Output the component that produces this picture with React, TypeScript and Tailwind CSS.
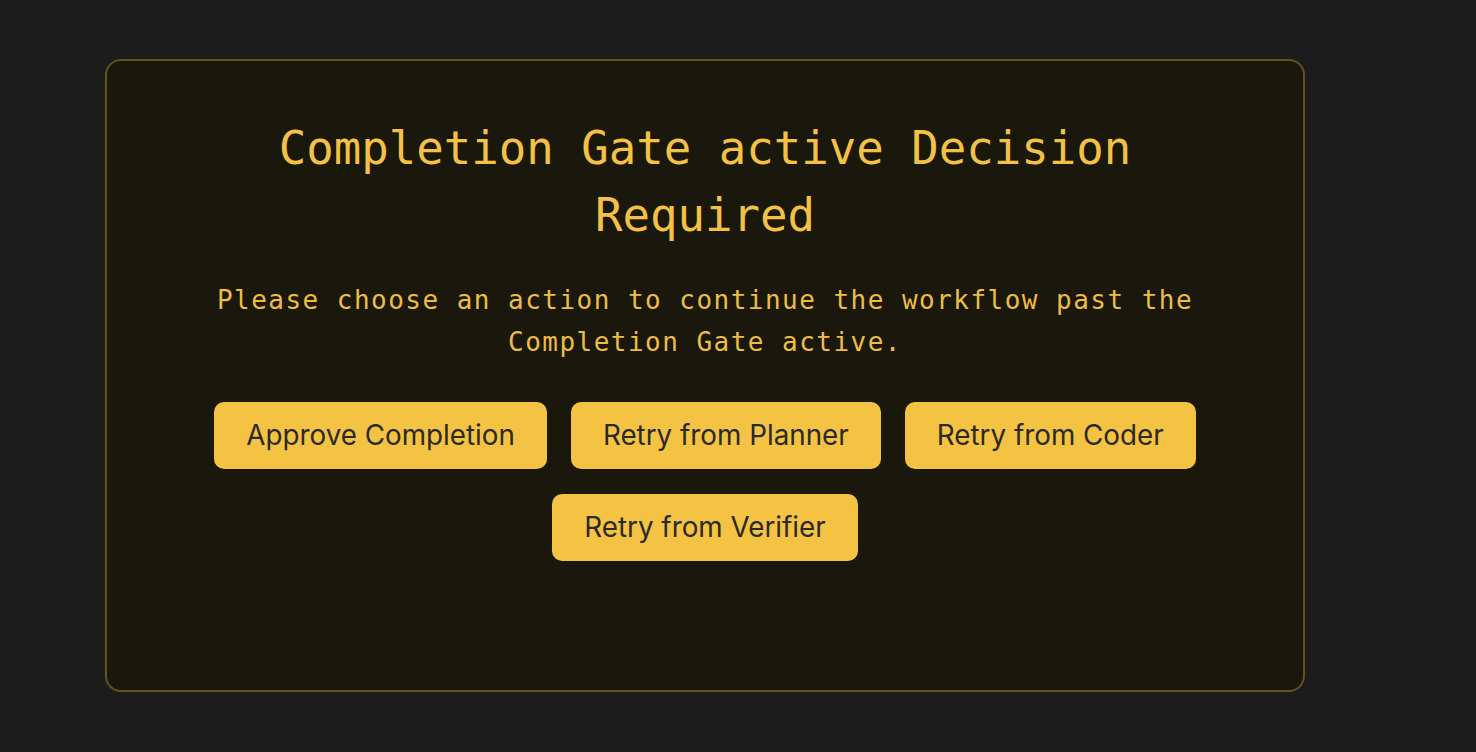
const actions = [
  "Approve Completion",
  "Retry from Planner",
  "Retry from Coder",
  "Retry from Verifier",
];

export default function App() {
  return (
    <main className="min-h-screen w-full bg-[#1c1c1c] pl-[105px] pt-[59px]">
      <section className="flex h-[633px] w-[1200px] flex-col items-center rounded-[16px] border-2 border-[#694f1c] bg-[#1a170d] px-[98px] pt-[54px]">
        <h1 className="text-center font-['DejaVu_Sans_Mono',monospace] text-[45.7px] leading-[67px] text-[#f3c244]">
          Completion Gate active Decision Required
        </h1>
        <p className="mt-[30px] text-center font-['DejaVu_Sans_Mono',monospace] text-[26px] leading-[42px] tracking-[1.47px] text-[#eebd43]">
          Please choose an action to continue the workflow past the Completion Gate active.
        </p>
        <div className="mt-[39px] flex flex-wrap justify-center gap-x-6 gap-y-[25px]">
          {actions.map((a) => (
            <button
              key={a}
              className="h-[67px] rounded-[10px] bg-[#f4c343] px-[32px] font-['Inter',sans-serif] text-[27.8px] text-[#2b2a26]"
            >
              {a}
            </button>
          ))}
        </div>
      </section>
    </main>
  );
}
